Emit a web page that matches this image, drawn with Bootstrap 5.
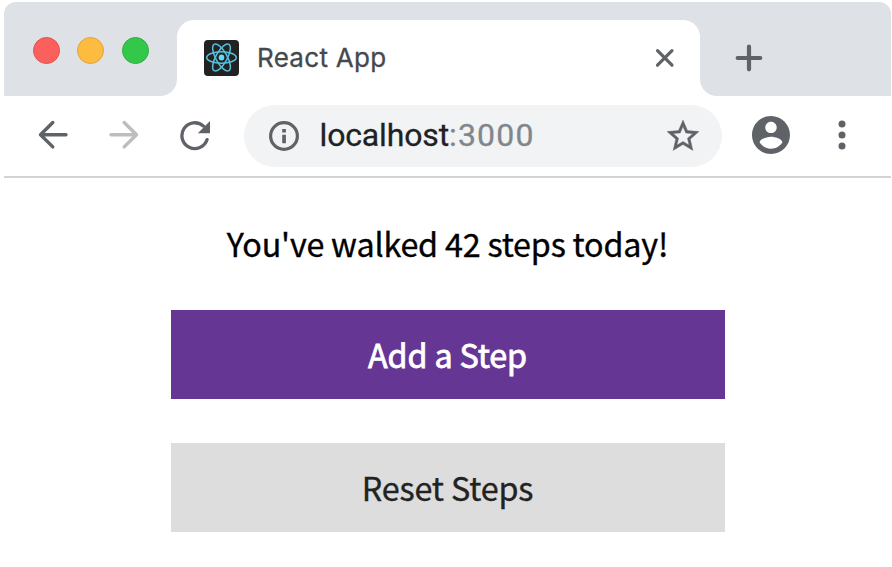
<!DOCTYPE html>
<html lang="en">
<head>
<meta charset="utf-8">
<meta name="viewport" content="width=device-width, initial-scale=1">
<title>React App</title>
<link href="https://cdn.jsdelivr.net/npm/bootstrap@5.3.0/dist/css/bootstrap.min.css" rel="stylesheet">
<style>
body { background: #fff; overflow: hidden; }
svg { display: block; flex: none; }
.browser { width: 887px; margin: 2px 0 0 4px; }
.tab-strip { height: 93.5px; background: #dee1e6; border-radius: 12px 12px 0 0; padding-left: 29px; }
.lights { width: 144px; gap: 17.4px; padding-top: 34.5px; }
.light { width: 27px; height: 27px; border-radius: 50%; border: 1px solid; }
.light-close { background: #fc605c; border-color: #e0504d; }
.light-min { background: #fdbc40; border-color: #dfa23a; }
.light-max { background: #34c84a; border-color: #2bae3c; }
.page-tab { width: 523px; margin-top: 18px; height: 75.5px; background: #fff; border-radius: 17px 17px 0 0; padding: 0 25px 0 27px; position: relative; }
.page-tab::before, .page-tab::after { content: ""; position: absolute; bottom: 0; width: 17px; height: 17px; }
.page-tab::before { left: -17px; background: radial-gradient(circle at 0 0, transparent 16.5px, #fff 17.5px); }
.page-tab::after { right: -17px; background: radial-gradient(circle at 100% 0, transparent 16.5px, #fff 17.5px); }
.tab-title { font: 400 26px/36px Inter, "Liberation Sans", sans-serif; color: #45494d; margin-left: 18px; letter-spacing: .3px; -webkit-text-stroke: .3px; }
.new-tab { margin: 41.5px 0 0 35px; }
.toolbar { height: 82.5px; border-bottom: 2px solid #d3d3d4; padding-left: 13px; }
.tool { width: 71px; height: 80px; padding-bottom: 1px; color: #5f6368; }
.tool-off { color: #bbbdbf; }
.address { width: 478px; height: 62px; margin: 0 13.5px 0 14px; padding: 0 23px 0 24px; border-radius: 31px; background: #f1f3f4; color: #5f6368; }
.url { font: 400 32px/40px Roboto, "Liberation Sans", sans-serif; color: #202124; margin: 0 0 2px 19.5px; letter-spacing: -.15px; -webkit-text-stroke: .3px; }
.port { color: #80868b; letter-spacing: 1.2px; }
.app { width: 554px; margin-left: 166.5px; padding-top: 43px; font-family: "Noto Sans CJK SC", "Noto Sans", sans-serif; }
.steps { font-size: 32.3px; line-height: 44px; color: #000; margin-bottom: 45px; white-space: nowrap; letter-spacing: -.2px; -webkit-text-stroke: .35px; }
.app .btn { --bs-btn-border-width: 0; --bs-btn-border-radius: 0; --bs-btn-font-family: inherit; height: 89px; padding: 0 0 1px; font-size: 32.3px; line-height: 44px; letter-spacing: -.15px; -webkit-text-stroke: .35px; }
.app .btn-add { --bs-btn-bg: #663695; --bs-btn-color: #fff; --bs-btn-hover-bg: #592d84; --bs-btn-hover-color: #fff; -webkit-text-stroke: .8px; }
.btn-reset { --bs-btn-bg: #ddd; --bs-btn-color: #222; --bs-btn-hover-bg: #ccc; margin-top: 44px; }
</style>
<script src="https://cdn.jsdelivr.net/npm/bootstrap@5.3.0/dist/js/bootstrap.bundle.min.js"></script>
</head>
<body>
<div class="browser">
  <header>
    <div class="tab-strip d-flex align-items-start">
      <div class="lights d-flex">
        <span class="light light-close"></span><span class="light light-min"></span><span class="light light-max"></span>
      </div>
      <div class="page-tab d-flex align-items-center">
        <svg width="35" height="36" viewBox="0 0 36 36" preserveAspectRatio="none">
          <rect width="36" height="36" rx="4" fill="#222"/>
          <g fill="none" stroke="#61dafb" stroke-width="1.6" opacity=".85">
            <ellipse cx="18" cy="17.5" rx="15.2" ry="5.8"/>
            <ellipse cx="18" cy="17.5" rx="15.2" ry="5.8" transform="rotate(60 18 17.5)"/>
            <ellipse cx="18" cy="17.5" rx="15.2" ry="5.8" transform="rotate(120 18 17.5)"/>
          </g>
          <circle cx="18" cy="17.5" r="2.9" fill="#61dafb"/>
        </svg>
        <span class="tab-title">React App</span>
        <svg class="ms-auto" width="22" height="22" viewBox="0 0 22 22"><path d="M4.5 3.7l14.5 14.5M19 3.7l-14.5 14.5" stroke="#5f6368" stroke-width="3.2" stroke-linecap="round"/></svg>
      </div>
      <svg class="new-tab" width="28" height="28" viewBox="0 0 28 28"><path d="M14 2.700v22.600M2.700 14h22.600" stroke="#5f6368" stroke-width="4.2" stroke-linecap="round"/></svg>
    </div>
    <div class="toolbar d-flex align-items-center">
      <div class="tool d-flex align-items-center justify-content-center">
        <svg width="32" height="32" viewBox="0 0 32 32" fill="none" stroke="currentColor" stroke-width="3.4" stroke-linecap="round" stroke-linejoin="round"><path d="M29 15.7H3.5M15.8 3.5L3.5 15.7 15.8 27.9"/></svg>
      </div>
      <div class="tool tool-off d-flex align-items-center justify-content-center">
        <svg width="32" height="32" viewBox="0 0 32 32" fill="none" stroke="currentColor" stroke-width="3.4" stroke-linecap="round" stroke-linejoin="round"><path d="M3 15.7H28.5M16.2 3.5L28.5 15.700 16.2 27.9"/></svg>
      </div>
      <div class="tool d-flex align-items-center justify-content-center">
        <svg width="32" height="32" viewBox="0.700 0 32 32"><path d="M28.8 20.6A12.9 12.9 0 1 1 25.2 7.1" fill="none" stroke="currentColor" stroke-width="3.3" stroke-linecap="round"/><path d="M31.700 2v12.200H19.500z" fill="currentColor"/></svg>
      </div>
      <div class="address d-flex align-items-center">
        <svg width="32" height="32" viewBox="0 0 32 32"><circle cx="16" cy="16" r="13.4" fill="none" stroke="currentColor" stroke-width="3.200"/><path d="M14.200 9h3.700v3.400h-3.700zM14.200 14.700h3.700v8.600h-3.700z" fill="currentColor"/></svg>
        <span class="url">localhost<span class="port">:3000</span></span>
        <svg class="ms-auto" width="32" height="32" viewBox="0 0 20 20"><path fill="currentColor" stroke="currentColor" stroke-width=".25" d="M20 7.240l-7.190-.62L10 0 7.190 6.630 0 7.240l5.460 4.730L3.820 19 10 15.270 16.180 19l-1.630-7.030L20 7.240zM10 13.400l-3.760 2.270 1-4.280-3.320-2.880 4.380-.38L10 4.100l1.710 4.040 4.380.38-3.320 2.880 1 4.280L10 13.400z"/></svg>
      </div>
      <div class="tool d-flex align-items-center justify-content-center">
        <svg width="38" height="38" viewBox="2 2 20 20"><path fill="currentColor" d="M12 2C6.480 2 2 6.480 2 12s4.480 10 10 10 10-4.480 10-10S17.520 2 12 2zm0 3c1.660 0 3 1.340 3 3s-1.340 3-3 3-3-1.340-3-3 1.340-3 3-3zm0 14.200c-2.500 0-4.710-1.280-6-3.220.03-1.990 4-3.080 6-3.080 1.990 0 5.970 1.090 6 3.080-1.290 1.940-3.500 3.220-6 3.220z"/></svg>
      </div>
      <div class="tool d-flex align-items-center justify-content-center">
        <svg width="8" height="32" viewBox="0 0 8 32" fill="currentColor"><circle cx="4" cy="4.900" r="3.500"/><circle cx="4" cy="15.900" r="3.500"/><circle cx="4" cy="26.900" r="3.500"/></svg>
      </div>
    </div>
  </header>
  <main class="app">
    <p class="steps text-center">You've walked 42 steps today!</p>
    <button type="button" class="btn btn-add d-block w-100">Add a Step</button>
    <button type="button" class="btn btn-reset d-block w-100">Reset Steps</button>
  </main>
</div>
</body>
</html>
